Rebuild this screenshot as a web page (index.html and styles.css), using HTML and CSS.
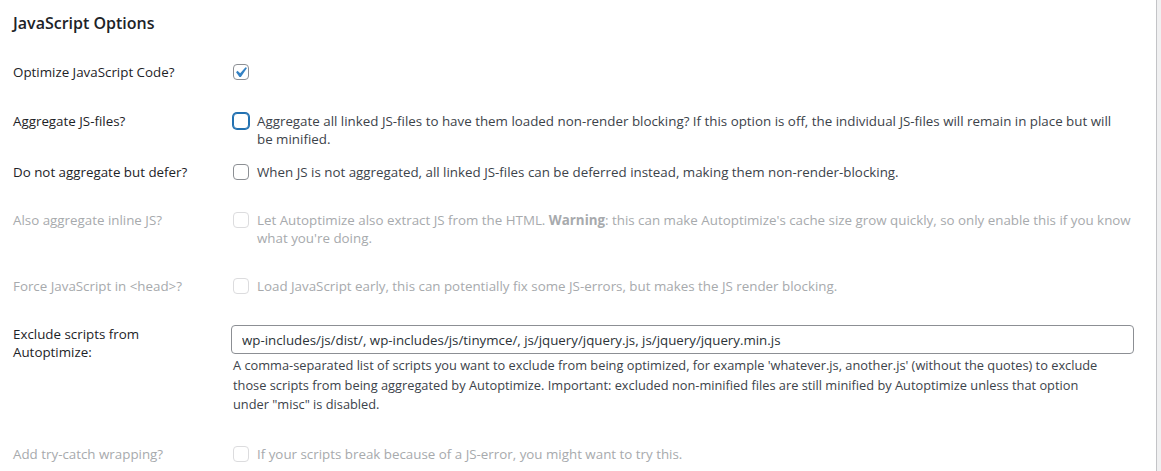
FILE: index.html
```html
<!DOCTYPE html>
<html lang="en">
<head>
<meta charset="utf-8">
<title>JavaScript Options</title>
<link rel="stylesheet" href="styles.css">
</head>
<body>
<div class="panel">
  <h2 class="title">JavaScript Options</h2>
  <div class="form">
    <div class="row">
      <div class="label">Optimize JavaScript Code?</div>
      <div class="field option">
        <span class="cb checked"><svg class="tick" viewBox="0 0 20 20" width="21" height="21"><path d="M14.83 4.89l1.34.94-5.81 8.38H9.02L5.78 9.67l1.34-1.25 2.57 2.4z" fill="#3582c4"/></svg></span>
      </div>
    </div>
    <div class="row first-join">
      <div class="label">Aggregate JS-files?</div>
      <div class="field option">
        <span class="cb focus"></span>
        <span class="text">Aggregate all linked JS-files to have them loaded non-render blocking? If this option is off, the individual JS-files will remain in place but will<br>be minified.</span>
      </div>
    </div>
    <div class="row">
      <div class="label">Do not aggregate but defer?</div>
      <div class="field option">
        <span class="cb"></span>
        <span class="text">When JS is not aggregated, all linked JS-files can be deferred instead, making them non-render-blocking.</span>
      </div>
    </div>
    <div class="row disabled">
      <div class="label">Also aggregate inline JS?</div>
      <div class="field option">
        <span class="cb"></span>
        <span class="text">Let Autoptimize also extract JS from the HTML. <strong>Warning</strong>: this can make Autoptimize's cache size grow quickly, so only enable this if you know what you're doing.</span>
      </div>
    </div>
    <div class="row disabled">
      <div class="label">Force JavaScript in &lt;head&gt;?</div>
      <div class="field option">
        <span class="cb"></span>
        <span class="text">Load JavaScript early, this can potentially fix some JS-errors, but makes the JS render blocking.</span>
      </div>
    </div>
    <div class="row">
      <div class="label">Exclude scripts from<br>Autoptimize:</div>
      <div class="field">
        <input class="text-input" type="text" value="wp-includes/js/dist/, wp-includes/js/tinymce/, js/jquery/jquery.js, js/jquery/jquery.min.js">
        <p class="description">A comma-separated list of scripts you want to exclude from being optimized, for example 'whatever.js, another.js' (without the quotes) to exclude those scripts from being aggregated by Autoptimize. Important: excluded non-minified files are still minified by Autoptimize unless that option under "misc" is disabled.</p>
      </div>
    </div>
    <div class="row disabled">
      <div class="label">Add try-catch wrapping?</div>
      <div class="field option">
        <span class="cb"></span>
        <span class="text">If your scripts break because of a JS-error, you might want to try this.</span>
      </div>
    </div>
  </div>
</div>
</body>
</html>
```

FILE: styles.css
```css
html, body {
  margin: 0;
  padding: 0;
}
body {
  background: #f0f0f1;
  font-family: "Open Sans", "Noto Sans", "Liberation Sans", sans-serif;
  font-size: 13.35px;
  color: #3c434a;
}
.panel {
  background: #fff;
  border-right: 1px solid #c3c4c7;
  margin-right: 4px;
  padding: 12px 22px 0 13px;
  min-height: 100vh;
  box-sizing: border-box;
}
.title {
  margin: 0;
  font-size: 16px;
  font-weight: 600;
  line-height: 22px;
  color: #1d2327;
}
.form {
  margin-top: 14px;
}
.row {
  display: grid;
  grid-template-columns: 220px 1fr;
  padding: 15px 0;
  line-height: 18px;
}
.row.first-join {
  padding-top: 16px;
  padding-bottom: 0;
}
.label {
  color: #1d2327;
}
.field {
  min-width: 0;
}
.option {
  display: flex;
  align-items: flex-start;
  gap: 8px;
}
.cb {
  position: relative;
  flex: none;
  width: 16px;
  height: 16px;
  margin-top: 1px;
  box-sizing: border-box;
  border: 1px solid #8c8f94;
  border-radius: 4px;
  background: #fff;
}
.cb.focus {
  border-color: #2271b1;
  box-shadow: 0 0 0 1px #2271b1;
}
.tick {
  position: absolute;
  left: -4px;
  top: -3px;
}
.disabled .label,
.disabled .text {
  color: #a7aaad;
}
.disabled .cb {
  border-color: #dcdcde;
}
.text strong {
  font-weight: 700;
}
.text-input {
  display: block;
  box-sizing: border-box;
  width: calc(100% + 2px);
  height: 29px;
  margin: 0 0 0 -2px;
  padding: 0 10px;
  border: 1px solid #8c8f94;
  border-radius: 4px;
  font-family: inherit;
  font-size: 13.3px;
  color: #2c3338;
  background: #fff;
}
.description {
  margin: 2px 24px 0 0;
  font-size: 12.8px;
  line-height: 19.5px;
  color: #3c434a;
}
```
